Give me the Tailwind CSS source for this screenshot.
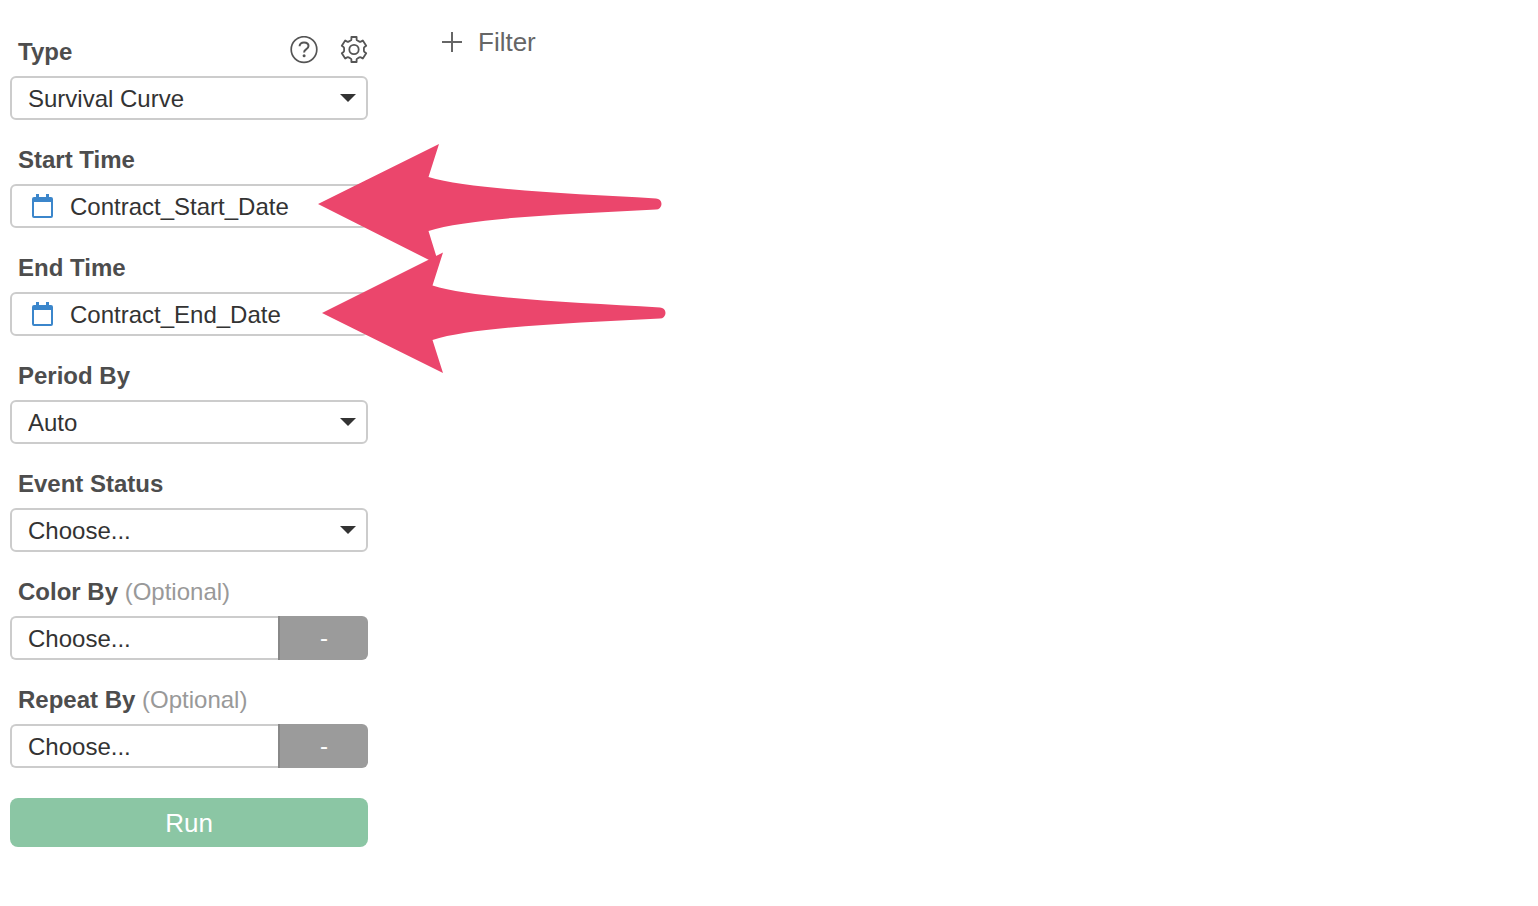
<!DOCTYPE html>
<html lang="en">
<head>
    <meta charset="UTF-8">
    <meta name="viewport" content="width=device-width, initial-scale=1.0">
    <title>Survival Curve</title>
    <script src="https://cdn.jsdelivr.net/npm/@tailwindcss/browser@4"></script>
</head>
<body class="bg-white min-h-screen font-['Helvetica_Neue','Liberation_Sans',Arial,sans-serif] text-2xl text-[#333]">
    <div class="flex items-start">
        <!-- Settings panel -->
        <form class="w-[378px] shrink-0 px-[10px] pt-9 flex flex-col gap-6">
            <div class="flex flex-col gap-2">
                <div class="flex items-center justify-between pl-2 h-8">
                    <label for="type" class="font-bold text-[#4d4d4d]">Type</label>
                    <div class="flex gap-[22px] -mt-1">
                        <button type="button" aria-label="Help" class="text-[#555]">
                            <svg class="size-7" viewBox="0 0 28 28" fill="none" stroke="currentColor" stroke-width="1.7">
                                <circle cx="14" cy="13.5" r="12.8"/>
                                <path stroke-width="2" d="M9.6 10.2c0-2.4 1.800-3.800 4.400-3.800s4.500 1.400 4.500 3.600c0 1.600-.9 2.400-2.400 3.400-1.400.9-2 1.500-2 3"/>
                                <circle cx="14.100" cy="19.800" r="1.500" fill="currentColor" stroke="none"/>
                            </svg>
                        </button>
                        <button type="button" aria-label="Settings" class="text-[#555]">
                            <svg class="size-7" viewBox="0 0 28 28" fill="none" stroke="currentColor" stroke-width="1.8" stroke-linejoin="round">
                                <path d="M11.400 1h5.200v2.400q0 .8.8 1.100l2 1.100q.7.400 1.400 0l2-1.100 3.400 5.300-1.700 1.200q-.7.500-.6 1.300v2.400q-.1.800.6 1.300l1.700 1.200-3.400 5.300-2-1.100q-.7-.4-1.400 0l-2 1.100q-.8.300-.8 1.100V26h-5.200v-2.400q0-.8-.8-1.100l-2-1.100q-.7-.4-1.400 0l-2 1.100-3.400-5.300 1.700-1.200q.7-.5.600-1.300v-2.400q.1-.8-.6-1.300L1.800 9.800l3.400-5.300 2 1.100q.7.400 1.400 0l2-1.100q.8-.3.800-1.100z"/>
                                <circle cx="14" cy="13.500" r="4.700"/>
                            </svg>
                        </button>
                    </div>
                </div>
                <div class="relative">
                    <select id="type" class="block w-full h-11 appearance-none rounded-md border-2 border-[#ccc] bg-white pt-[2px] pl-4 pr-10">
                        <option>Survival Curve</option>
                    </select>
                    <svg class="absolute right-3 top-[18px] w-4 h-2 pointer-events-none" viewBox="0 0 16 8" fill="#333"><path d="M0 0h16L8 8z"/></svg>
                </div>
            </div>

            <div class="flex flex-col gap-2">
                <label for="start" class="pl-2 leading-8 font-bold text-[#4d4d4d]">Start Time</label>
                <div class="relative">
                    <select id="start" class="block w-full h-11 appearance-none rounded-md border-2 border-[#ccc] bg-white pt-[2px] pl-[58px]">
                        <option>Contract_Start_Date</option>
                    </select>
                    <svg class="absolute left-[22px] top-[10px] w-[21px] h-6 pointer-events-none" viewBox="0 0 21 24" fill="#3b86cb">
                        <path fill-rule="evenodd" d="M4 0h3v3h7V0h3v3h2q2 0 2 2v17q0 2-2 2H2q-2 0-2-2V5q0-2 2-2h2zM2 8v14h17V8z"/>
                    </svg>
                    <svg class="absolute left-[308px] -top-10 z-10 w-[344px] h-[121px] pointer-events-none" viewBox="0 0 344 121" fill="#eb466c">
                        <path d="M0 60L121 0l-10.500 33C150 45 248 49.500 338 54.500a5.500 5.500 0 0 1 0 11C248 70 150 74 110.500 87L121 121z"/>
                    </svg>
                </div>
            </div>

            <div class="flex flex-col gap-2">
                <label for="end" class="pl-2 leading-8 font-bold text-[#4d4d4d]">End Time</label>
                <div class="relative">
                    <select id="end" class="block w-full h-11 appearance-none rounded-md border-2 border-[#ccc] bg-white pt-[2px] pl-[58px]">
                        <option>Contract_End_Date</option>
                    </select>
                    <svg class="absolute left-[22px] top-[10px] w-[21px] h-6 pointer-events-none" viewBox="0 0 21 24" fill="#3b86cb">
                        <path fill-rule="evenodd" d="M4 0h3v3h7V0h3v3h2q2 0 2 2v17q0 2-2 2H2q-2 0-2-2V5q0-2 2-2h2zM2 8v14h17V8z"/>
                    </svg>
                    <svg class="absolute left-[312px] -top-10 z-10 w-[344px] h-[121px] pointer-events-none" viewBox="0 0 344 121" fill="#eb466c">
                        <path d="M0 61L121 .5l-10.500 33C150 46 248 50.500 338 55.500a5.500 5.500 0 0 1 0 11C248 71 150 75 110.500 88L121 121z"/>
                    </svg>
                </div>
            </div>

            <div class="flex flex-col gap-2">
                <label for="period" class="pl-2 leading-8 font-bold text-[#4d4d4d]">Period By</label>
                <div class="relative">
                    <select id="period" class="block w-full h-11 appearance-none rounded-md border-2 border-[#ccc] bg-white pt-[2px] pl-4 pr-10">
                        <option>Auto</option>
                    </select>
                    <svg class="absolute right-3 top-[18px] w-4 h-2 pointer-events-none" viewBox="0 0 16 8" fill="#333"><path d="M0 0h16L8 8z"/></svg>
                </div>
            </div>

            <div class="flex flex-col gap-2">
                <label for="status" class="pl-2 leading-8 font-bold text-[#4d4d4d]">Event Status</label>
                <div class="relative">
                    <select id="status" class="block w-full h-11 appearance-none rounded-md border-2 border-[#ccc] bg-white pt-[2px] pl-4 pr-10">
                        <option>Choose...</option>
                    </select>
                    <svg class="absolute right-3 top-[18px] w-4 h-2 pointer-events-none" viewBox="0 0 16 8" fill="#333"><path d="M0 0h16L8 8z"/></svg>
                </div>
            </div>

            <div class="flex flex-col gap-2">
                <label for="color" class="pl-2 leading-8 font-bold text-[#4d4d4d]">Color By <span class="font-normal text-[#999]">(Optional)</span></label>
                <div class="flex">
                    <select id="color" class="flex-1 min-w-0 h-11 appearance-none rounded-l-md border-2 border-r-0 border-[#ccc] bg-white pt-[2px] pl-4">
                        <option>Choose...</option>
                    </select>
                    <button type="button" class="w-[90px] h-11 rounded-r-md border-l-2 border-[#888] bg-[#9b9b9b] text-white">-</button>
                </div>
            </div>

            <div class="flex flex-col gap-2">
                <label for="repeat" class="pl-2 leading-8 font-bold text-[#4d4d4d]">Repeat By <span class="font-normal text-[#999]">(Optional)</span></label>
                <div class="flex">
                    <select id="repeat" class="flex-1 min-w-0 h-11 appearance-none rounded-l-md border-2 border-r-0 border-[#ccc] bg-white pt-[2px] pl-4">
                        <option>Choose...</option>
                    </select>
                    <button type="button" class="w-[90px] h-11 rounded-r-md border-l-2 border-[#888] bg-[#9b9b9b] text-white">-</button>
                </div>
            </div>

            <button type="submit" class="mt-[6px] h-[49px] rounded-lg bg-[#8bc6a4] pt-[2px] text-[26px] text-white">Run</button>
        </form>

        <!-- Chart area -->
        <main class="flex-1 pl-16 pt-6">
            <button type="button" class="flex items-center gap-4 h-9 text-[26px] text-[#666]">
                <svg class="w-5 h-5" viewBox="0 0 20 20" fill="none" stroke="currentColor" stroke-width="2"><path d="M10 0v20M0 10h20"/></svg>
                Filter
            </button>
        </main>
    </div>
</body>
</html>
